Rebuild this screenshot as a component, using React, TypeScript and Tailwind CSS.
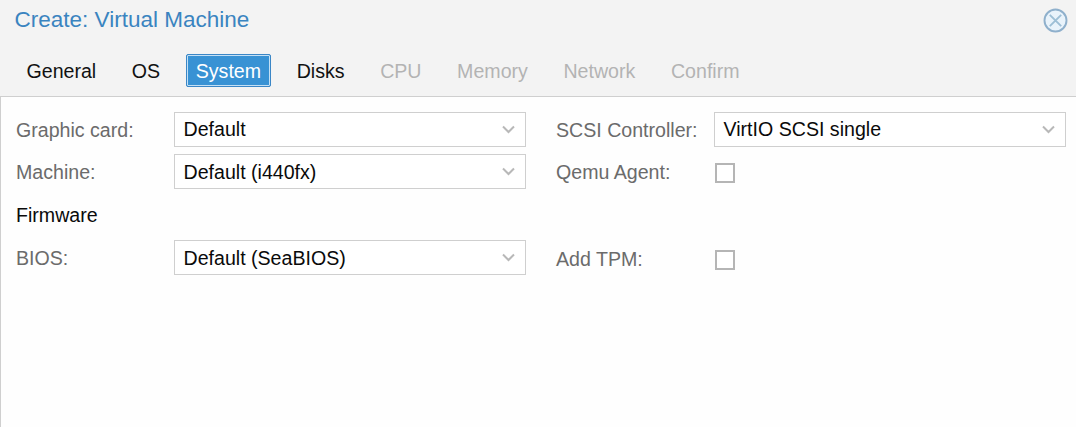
type TabState = "normal" | "active" | "disabled";

const tabs: { label: string; state: TabState }[] = [
  { label: "General", state: "normal" },
  { label: "OS", state: "normal" },
  { label: "System", state: "active" },
  { label: "Disks", state: "normal" },
  { label: "CPU", state: "disabled" },
  { label: "Memory", state: "disabled" },
  { label: "Network", state: "disabled" },
  { label: "Confirm", state: "disabled" },
];

const tabStyles: Record<TabState, string> = {
  normal: "border-transparent text-[#111111]",
  active: "border-[#3a86c6] bg-[#3892d4] text-white shadow-[inset_0_0_0_1px_#c4e0f5]",
  disabled: "border-transparent text-[#b3b3b3]",
};

function Select({ value, first = false }: { value: string; first?: boolean }) {
  return (
    <button
      className={`flex h-[35px] w-[352px] items-center justify-between border border-[#cfcfcf] bg-white pr-[9px] pl-[8.5px] text-left text-[#0a0a0a] ${first ? "pb-px" : "pt-px"}`}
    >
      <span>{value}</span>
      <svg className={first ? "" : "mb-[2px]"} width="15" height="11" viewBox="0 0 15 11" fill="none" stroke="#b8b8b8" strokeWidth="2">
        <path d="M2 2.5 7.5 8 13 2.5" />
      </svg>
    </button>
  );
}

function Checkbox({ className }: { className: string }) {
  return (
    <span
      role="checkbox"
      aria-checked="false"
      className={`ml-px block size-5 border-2 border-[#b5b5b5] bg-white ${className}`}
    />
  );
}

function Label({ children }: { children: string }) {
  return <span className="w-[158px] shrink-0 text-[#6b6b6b]">{children}</span>;
}

export default function App() {
  return (
    <div className="flex h-[427px] w-[1076px] flex-col overflow-hidden bg-[#f3f3f3] font-['Liberation_Sans',Arial,sans-serif] text-[19.6px] leading-[24px] whitespace-nowrap">
      <header className="flex h-[40px] shrink-0 items-center justify-between pr-[8px] pl-[14.5px]">
        <h1 className="text-[22.5px] text-[#3a84c0]">Create: Virtual Machine</h1>
        <button aria-label="Close">
          <svg width="25" height="25" viewBox="0 0 25 25" fill="none">
            <circle cx="12.5" cy="12.5" r="11" fill="#e9f3fb" stroke="#8fb0cc" strokeWidth="1.9" />
            <path d="m6.8 6.8 11.4 11.4m0-11.4L6.8 18.2" stroke="#9dbfd6" strokeWidth="1.9" />
          </svg>
        </button>
      </header>
      <nav className="flex h-[56px] shrink-0 gap-[15.6px] pt-[14px] pl-[16.5px]">
        {tabs.map((tab) => (
          <button key={tab.label} className={`h-[33px] rounded-[2px] border px-[9px] ${tabStyles[tab.state]}`}>
            {tab.label}
          </button>
        ))}
      </nav>
      <main className="flex flex-1 flex-col border-t border-l border-[#cfcfcf] bg-[#fefefe] pt-[15px] pl-[15px]">
        <div className="flex h-[35px] items-center">
          <Label>Graphic card:</Label>
          <Select value="Default" first />
          <div className="ml-[30px] flex items-center">
            <Label>SCSI Controller:</Label>
            <Select value="VirtIO SCSI single" first />
          </div>
        </div>
        <div className="mt-[7px] flex h-[35px] items-center">
          <Label>Machine:</Label>
          <Select value="Default (i440fx)" />
          <div className="ml-[30px] flex items-center">
            <Label>Qemu Agent:</Label>
            <Checkbox className="mt-[2px]" />
          </div>
        </div>
        <div className="mt-[8px] flex h-[35px] items-center text-[#0a0a0a]">Firmware</div>
        <div className="mt-[8px] flex h-[35px] items-center">
          <Label>BIOS:</Label>
          <Select value="Default (SeaBIOS)" />
          <div className="ml-[30px] flex items-center pt-[2px]">
            <Label>Add TPM:</Label>
            <Checkbox className="mt-[2px]" />
          </div>
        </div>
      </main>
    </div>
  );
}
